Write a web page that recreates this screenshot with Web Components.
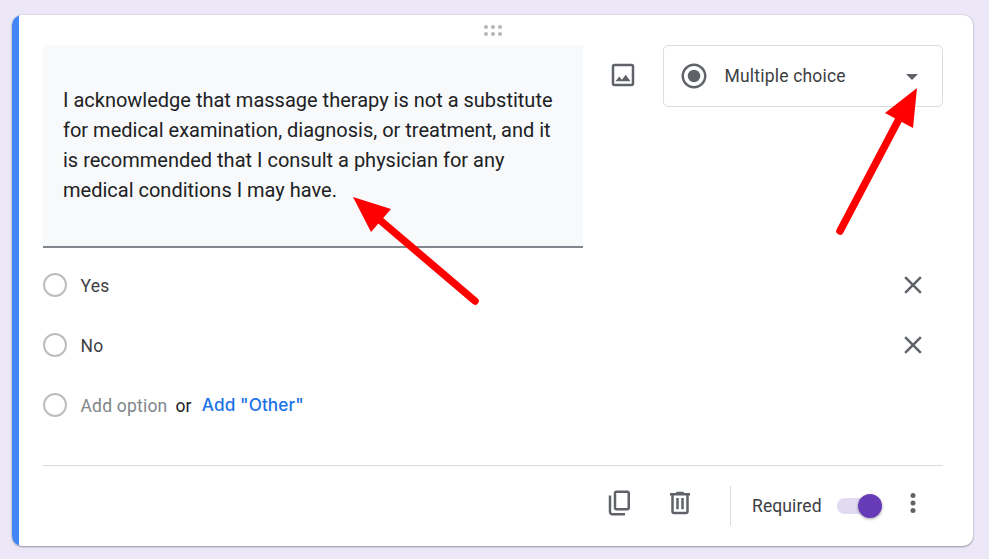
<!DOCTYPE html>
<html>
<head>
<meta charset="utf-8">
<title>Question card</title>
<style>
html, body {
	margin: 0;
	height: 100%;
}

body {
	background: #ede8f7;
	font-family: Roboto, "Liberation Sans", sans-serif;
	color: #202124;
}
</style>
</head>
<body>

<gf-page>
	<gf-card>
		<gf-title slot="title">I acknowledge that massage therapy is not a substitute for medical examination, diagnosis, or treatment, and it is recommended that I consult a physician for any medical conditions I may have.</gf-title>
		<gf-icon slot="media" name="image"></gf-icon>
		<gf-type-select slot="type">Multiple choice</gf-type-select>

		<gf-option removable>Yes</gf-option>
		<gf-option removable>No</gf-option>
		<gf-add-option></gf-add-option>

		<gf-icon slot="footer" name="copy"></gf-icon>
		<gf-icon slot="footer" name="trash"></gf-icon>
		<gf-toggle slot="footer" checked>Required</gf-toggle>
		<gf-icon slot="footer" name="more"></gf-icon>
	</gf-card>
	<gf-arrows></gf-arrows>
</gf-page>

<script>
(() => {

const icons = {
	image: '<path d="M19 5v14H5V5h14m0-2H5c-1.1 0-2 .9-2 2v14c0 1.1.9 2 2 2h14c1.1 0 2-.9 2-2V5c0-1.1-.9-2-2-2zm-4.86 8.86l-3 3.87L9 13.14 6 17h12l-3.86-5.14z"/>',
	radio: '<path d="M12 2C6.48 2 2 6.48 2 12s4.48 10 10 10 10-4.48 10-10S17.52 2 12 2zm0 18c-4.42 0-8-3.58-8-8s3.58-8 8-8 8 3.58 8 8-3.58 8-8 8z"/><circle cx="12" cy="12" r="5"/>',
	close: '<path d="M19 6.41L17.59 5 12 10.59 6.41 5 5 6.41 10.59 12 5 17.59 6.41 19 12 13.41 17.59 19 19 17.59 13.41 12z"/>',
	copy: '<path d="M5 6v13c0 .55.45 1 1 1h10v2H6c-1.65 0-3-1.35-3-3V6h2z"/><path d="M18 2H9C7.9 2 7 2.9 7 4v12c0 1.1.9 2 2 2h9c1.1 0 2-.9 2-2V4c0-1.1-.9-2-2-2zm0 14H9V4h9v12z"/>',
	trash: '<path d="M15 4V3H9v1H4v2h1v13c0 1.1.9 2 2 2h10c1.1 0 2-.9 2-2V6h1V4h-5zm2 15H7V6h10v13zM9 8h2v9H9zm4 0h2v9h-2z"/>',
	more: '<circle cx="12" cy="6" r="2"/><circle cx="12" cy="12" r="2"/><circle cx="12" cy="18" r="2"/>'
};

function define_element(name, template, extra) {
	customElements.define(name, class extends HTMLElement {
		constructor() {
			super();
			this.attachShadow({ mode: 'open' });
			this.shadowRoot.innerHTML = template;

			if (extra) {
				extra(this);
			}
		}
	});
}

define_element('gf-page', `
<style>
:host {
	display: block;
	position: relative;
	box-sizing: border-box;
	height: 559px;
	padding: 15px 16px 13px 12px;
	overflow: hidden;
}
</style>
<slot></slot>
`);

define_element('gf-card', `
<style>
:host {
	display: flex;
	height: 531px;
	border-radius: 10px;
	overflow: hidden;
	background: #fff;
	box-shadow: 0 1px 2px rgba(60, 64, 67, 0.45), 0 0 2px rgba(60, 64, 67, 0.2);
}

.stripe {
	flex: 0 0 7px;
	background: #4285f4;
}

.content {
	flex: 1 1 auto;
	min-width: 0;
	padding: 0 30px 0 24px;
	display: flex;
	flex-direction: column;
}

.grip {
	height: 30px;
	margin-left: -31px;
	margin-right: -30px;
	display: flex;
	justify-content: center;
	align-items: center;
}

.head {
	display: grid;
	grid-template-columns: 540px 80px 280px;
	align-items: start;
}

.media {
	display: flex;
	justify-content: center;
}

.options {
	margin-top: 7px;
	display: flex;
	flex-direction: column;
}

.footer {
	margin-top: 30px;
	height: 80px;
	border-top: 1px solid #dadce0;
	display: flex;
	justify-content: flex-end;
	align-items: center;
}
</style>
<div class="stripe"></div>
<div class="content">
	<div class="grip">
		<svg width="20" height="12" viewBox="0 0 20 12" fill="#b4b6b9">
			<circle cx="3" cy="3" r="2"/><circle cx="10" cy="3" r="2"/><circle cx="17" cy="3" r="2"/>
			<circle cx="3" cy="10" r="2"/><circle cx="10" cy="10" r="2"/><circle cx="17" cy="10" r="2"/>
		</svg>
	</div>
	<div class="head">
		<slot name="title"></slot>
		<div class="media"><slot name="media"></slot></div>
		<slot name="type"></slot>
	</div>
	<div class="options"><slot></slot></div>
	<div class="footer"><slot name="footer"></slot></div>
</div>
`);

define_element('gf-title', `
<style>
:host {
	display: block;
	box-sizing: border-box;
	height: 203px;
	padding: 40px 20px 0;
	background: #f8f9fa;
	border-bottom: 2px solid #80868b;
	font-size: 20px;
	line-height: 30px;
	color: #202124;
}
</style>
<slot></slot>
`);

define_element('gf-icon', `
<style>
:host {
	display: flex;
	justify-content: center;
	align-items: flex-start;
	width: 60px;
	height: 60px;
	padding-top: 15px;
	box-sizing: border-box;
	color: #5f6368;
}

:host([name="image"]) {
	padding-top: 0;
	height: auto;
	margin-top: 15px;
}

:host([name="copy"]),
:host([name="trash"]),
:host([name="more"]) {
	padding-top: 12px;
}

:host([name="trash"]) {
	margin-right: 20px;
}

svg {
	display: block;
	width: 30px;
	height: 30px;
	fill: currentColor;
}
</style>
<svg viewBox="0 0 24 24"></svg>
`, (el) => {
	el.shadowRoot.querySelector('svg').innerHTML = icons[el.getAttribute('name')];
});

define_element('gf-type-select', `
<style>
:host {
	display: flex;
	align-items: center;
	box-sizing: border-box;
	height: 62px;
	padding: 0 24px 0 15px;
	border: 1px solid #dadce0;
	border-radius: 5px;
	font-size: 17.5px;
	letter-spacing: 0.2px;
	color: #3c4043;
}

.radio {
	display: block;
	width: 30px;
	height: 30px;
	fill: #5f6368;
}

.label {
	flex: 1 1 auto;
	margin-left: 15.5px;
}

.caret {
	width: 0;
	height: 0;
	margin-top: 1px;
	border-left: 6.5px solid transparent;
	border-right: 6.5px solid transparent;
	border-top: 6.5px solid #5f6368;
}
</style>
<svg class="radio" viewBox="0 0 24 24">${icons.radio}</svg>
<span class="label"><slot></slot></span>
<span class="caret"></span>
`);

define_element('gf-option', `
<style>
:host {
	display: flex;
	align-items: center;
	height: 60px;
	font-size: 17.5px;
	letter-spacing: 0.2px;
	color: #3c4043;
}

.ring {
	flex: 0 0 auto;
	box-sizing: border-box;
	width: 24px;
	height: 24px;
	margin-right: 13.5px;
	border: 2px solid #bdbdbd;
	border-radius: 50%;
}

.label {
	flex: 1 1 auto;
	padding-top: 1px;
}

svg {
	display: block;
	width: 30px;
	height: 30px;
	margin-right: 15px;
	fill: #5f6368;
}
</style>
<span class="ring"></span>
<span class="label"><slot></slot></span>
<svg viewBox="0 0 24 24">${icons.close}</svg>
`);

define_element('gf-add-option', `
<style>
:host {
	display: flex;
	align-items: center;
	height: 60px;
	font-size: 17.5px;
	letter-spacing: 0.2px;
}

.ring {
	box-sizing: border-box;
	width: 24px;
	height: 24px;
	margin-right: 13.5px;
	border: 2px solid #bdbdbd;
	border-radius: 50%;
}

.add {
	padding-top: 1px;
	color: #80868b;
}

.or {
	margin: 0 10px 0 8px;
	padding-top: 1px;
	color: #202124;
}

.other {
	font-family: Inter, Roboto, sans-serif;
	font-size: 17.2px;
	font-weight: 500;
	letter-spacing: 0.1px;
	padding-bottom: 1px;
	color: #1a73e8;
}
</style>
<span class="ring"></span>
<span class="add">Add option</span>
<span class="or">or</span>
<span class="other">Add "Other"</span>
`);

define_element('gf-toggle', `
<style>
:host {
	display: flex;
	align-items: center;
	height: 40px;
	padding-left: 21px;
	border-left: 1px solid #dadce0;
	font-size: 17.5px;
	letter-spacing: 0.1px;
	color: #3c4043;
}

.track {
	position: relative;
	width: 46px;
	height: 16px;
	margin-left: 15.3px;
}

.track::before {
	content: "";
	position: absolute;
	left: 0;
	top: 0;
	right: 4px;
	bottom: 0;
	border-radius: 8px;
	background: #e1daf1;
}

.thumb {
	position: absolute;
	right: 1px;
	top: -4px;
	width: 24px;
	height: 24px;
	border-radius: 50%;
	background: #673ab7;
	box-shadow: 0 1px 3px rgba(0, 0, 0, 0.35);
}
</style>
<slot></slot>
<span class="track"><span class="thumb"></span></span>
`);

define_element('gf-arrows', `
<style>
:host {
	position: absolute;
	left: 0;
	top: 0;
	width: 989px;
	height: 559px;
	pointer-events: none;
}

svg {
	display: block;
}
</style>
<svg width="989" height="559" viewBox="0 0 989 559">
	<g fill="#ff0000" stroke="none">
		<polygon points="353,197 391,209 371,232"/>
		<polygon points="917,88 885,113 913,128"/>
	</g>
	<g stroke="#ff0000" stroke-width="7.5" stroke-linecap="round" fill="none">
		<line x1="381" y1="221" x2="475" y2="301"/>
		<line x1="899" y1="119" x2="840" y2="231"/>
	</g>
</svg>
`);

})();
</script>
</body>
</html>
